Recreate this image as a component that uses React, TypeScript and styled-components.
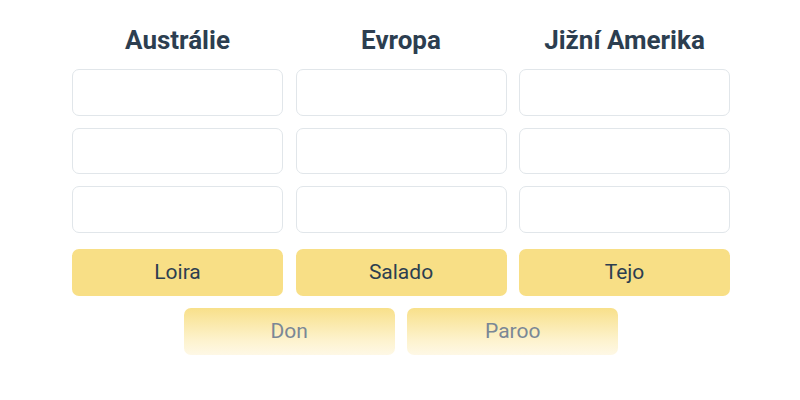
import React from "react";
import styled, { createGlobalStyle } from "styled-components";

const Global = createGlobalStyle`
  html, body { margin: 0; padding: 0; background: #ffffff; }
  body { font-family: Roboto, "Liberation Sans", sans-serif; }
`;

const Page = styled.div`
  width: 800px;
  height: 400px;
  box-sizing: border-box;
  padding-top: 23px;
  padding-left: 2px;
  display: flex;
  flex-direction: column;
  align-items: center;
`;

const Grid = styled.div`
  display: grid;
  grid-template-columns: repeat(3, 211px);
  column-gap: 12.5px;
  row-gap: 12px;
`;

const Heading = styled.div`
  height: 34px;
  display: flex;
  align-items: center;
  justify-content: center;
  font-size: 26px;
  font-weight: 700;
  color: #2c3e50;
`;

const Slot = styled.div`
  height: 46.5px;
  box-sizing: border-box;
  border: 1px solid #e1e6ea;
  border-radius: 7px;
  background: #ffffff;
`;

const Chip = styled.div<{ $fade?: boolean }>`
  width: 211px;
  height: 47px;
  box-sizing: border-box;
  border-radius: 7px;
  display: flex;
  align-items: center;
  justify-content: center;
  font-size: 21px;
  color: ${(p) => (p.$fade ? "#7a8796" : "#2c3e50")};
  background: ${(p) =>
    p.$fade ? "linear-gradient(180deg, #f8e08a 0%, #fdf3cf 70%, #fef8e6 100%)" : "#f8df86"};
  margin-top: ${(p) => (p.$fade ? "0" : "4px")};
`;

const Row = styled.div`
  display: flex;
  gap: 12.5px;
  margin-top: 12px;
`;

export default function App() {
  const heads = ["Austrálie", "Evropa", "Jižní Amerika"];
  return (
    <Page>
      <Global />
      <Grid>
        {heads.map((h) => (
          <Heading key={h}>{h}</Heading>
        ))}
        {Array.from({ length: 9 }).map((_, i) => (
          <Slot key={i} />
        ))}
        <Chip>Loira</Chip>
        <Chip>Salado</Chip>
        <Chip>Tejo</Chip>
      </Grid>
      <Row>
        <Chip $fade>Don</Chip>
        <Chip $fade>Paroo</Chip>
      </Row>
    </Page>
  );
}
